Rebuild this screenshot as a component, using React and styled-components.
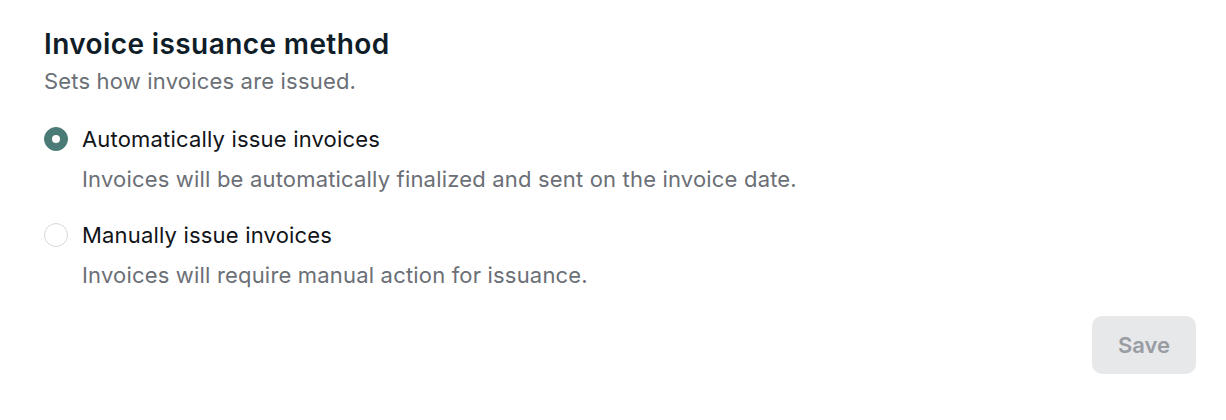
import React, { useState } from 'react';
import styled, { createGlobalStyle } from 'styled-components';

const GlobalStyle = createGlobalStyle`
  body {
    margin: 0;
    background: #ffffff;
    font-family: Inter, "Noto Sans", sans-serif;
  }
`;

const Panel = styled.section`
  width: 1226px;
  height: 420px;
  box-sizing: border-box;
  padding: 26px 30px 0 44px;
  display: flex;
  flex-direction: column;
`;

const Title = styled.h2`
  margin: 0;
  font-size: 28px;
  line-height: 36px;
  font-weight: 600;
  letter-spacing: 0.4px;
  color: #0f1d28;
`;

const Subtitle = styled.p`
  margin: 4px 0 0;
  font-size: 22px;
  line-height: 30px;
  letter-spacing: 0.18px;
  color: #6b6f76;
`;

const Options = styled.div`
  display: flex;
  flex-direction: column;
  gap: 26px;
  margin-top: 28px;
`;

const Option = styled.label`
  display: grid;
  grid-template-columns: 24px 1fr;
  column-gap: 14px;
  row-gap: 10px;
  cursor: pointer;
`;

const Radio = styled.span`
  width: 24px;
  height: 24px;
  box-sizing: border-box;
  border-radius: 50%;
  align-self: center;
  display: flex;
  align-items: center;
  justify-content: center;
  background: ${p => (p.$checked ? '#4b7b76' : '#ffffff')};
  border: 1px solid ${p => (p.$checked ? '#4b7b76' : '#d6d8dc')};

  &::after {
    content: '';
    width: 8px;
    height: 8px;
    border-radius: 50%;
    background: #ffffff;
    display: ${p => (p.$checked ? 'block' : 'none')};
  }
`;

const Label = styled.span`
  font-size: 22px;
  line-height: 30px;
  letter-spacing: 0.18px;
  color: #111418;
`;

const Description = styled.span`
  grid-column: 2;
  font-size: 22px;
  line-height: 30px;
  letter-spacing: 0.18px;
  color: #6b6f76;
`;

const Footer = styled.div`
  display: flex;
  justify-content: flex-end;
  margin-top: 26px;
`;

const SaveButton = styled.button`
  width: 104px;
  height: 58px;
  border: none;
  border-radius: 10px;
  background: #e6e8ea;
  color: #9a9ca3;
  font-family: Inter, "Noto Sans", sans-serif;
  font-size: 22px;
  font-weight: 600;
  cursor: not-allowed;
`;

const options = [
  {
    id: 'auto',
    label: 'Automatically issue invoices',
    description: 'Invoices will be automatically finalized and sent on the invoice date.',
  },
  {
    id: 'manual',
    label: 'Manually issue invoices',
    description: 'Invoices will require manual action for issuance.',
  },
];

export default function App() {
  const [method, setMethod] = useState('auto');

  return (
    <>
      <GlobalStyle />
      <Panel>
        <Title>Invoice issuance method</Title>
        <Subtitle>Sets how invoices are issued.</Subtitle>
        <Options>
          {options.map(o => (
            <Option key={o.id} onClick={() => setMethod(o.id)}>
              <Radio $checked={method === o.id} />
              <Label>{o.label}</Label>
              <Description>{o.description}</Description>
            </Option>
          ))}
        </Options>
        <Footer>
          <SaveButton disabled>Save</SaveButton>
        </Footer>
      </Panel>
    </>
  );
}
